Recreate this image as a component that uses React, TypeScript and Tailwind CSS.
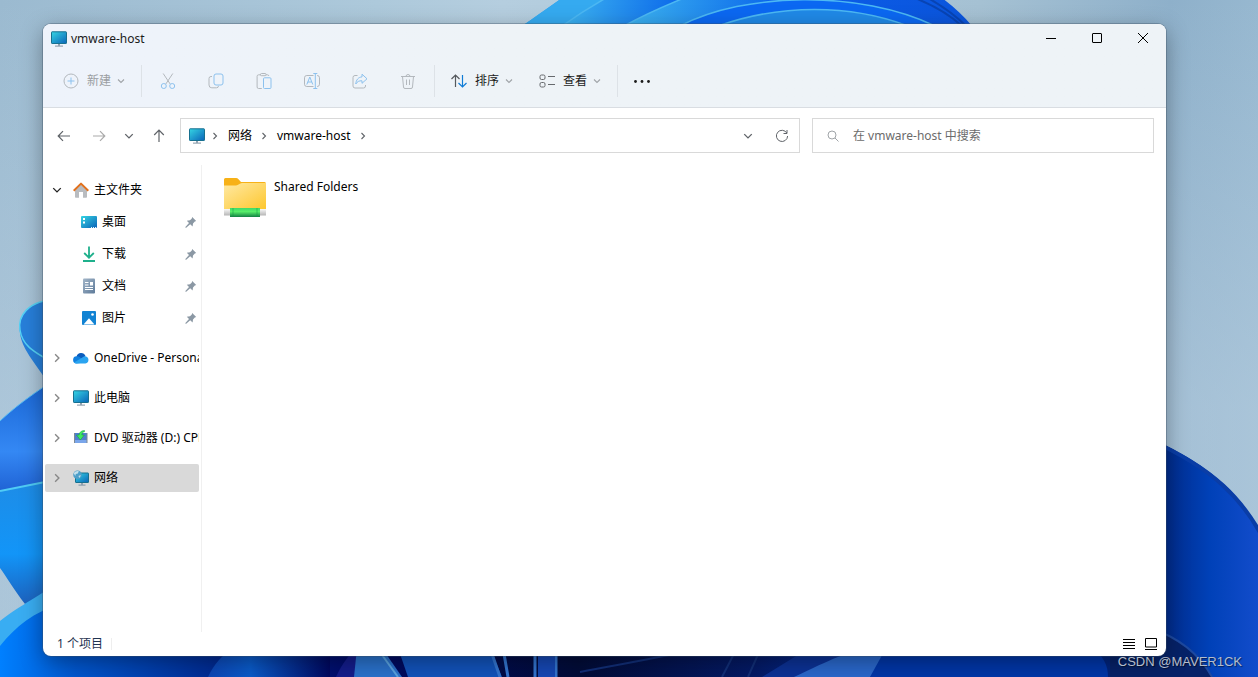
import type { ReactNode } from "react";

type IconProps = { className?: string };

function Monitor({ className = "h-4 w-4" }: IconProps) {
  return (
    <svg viewBox="0 0 16 16" className={className}>
      <defs>
        <linearGradient id="screen" x1="0" y1="0" x2="1" y2="1">
          <stop offset="0" stopColor="#35d5e3" />
          <stop offset="1" stopColor="#0a63b8" />
        </linearGradient>
      </defs>
      <path d="M7 12h2v3H7z" fill="#8fa0ae" />
      <path d="M4 14.5h8v1.2H4z" fill="#9aa8b5" />
      <rect x=".5" y=".8" width="15" height="11.7" rx=".6" fill="url(#screen)" stroke="#17708f" />
    </svg>
  );
}

function Chevron({ dir = "right", className = "h-2 w-2" }: IconProps & { dir?: "right" | "down" }) {
  return (
    <svg viewBox="0 0 8 8" className={className} fill="none" stroke="currentColor" strokeWidth="1.1">
      <path d={dir === "right" ? "M2.5 1 5.5 4 2.5 7" : "M1 2.5 4 5.5 7 2.5"} />
    </svg>
  );
}

function Arrow({ className = "" }: IconProps) {
  return (
    <svg viewBox="0 0 14 14" className={`h-3.5 w-3.5 ${className}`} fill="none" stroke="currentColor" strokeWidth="1.2">
      <path d="M13 7H1.2M6 2.2 1.2 7 6 11.8" />
    </svg>
  );
}

function Stroke({ children }: { children: ReactNode }) {
  return (
    <svg viewBox="0 0 16 16" className="h-4 w-4 shrink-0" fill="none" stroke="#b3b8bd" strokeWidth="1">
      {children}
    </svg>
  );
}

const BLUE = "#8cc1ee";

const tools = [
  {
    label: "剪切",
    icon: (
      <Stroke>
        <path d="M3.2.5 10.2 11M12.8.5 5.8 11" />
        <circle cx="3.8" cy="13" r="2.5" stroke={BLUE} />
        <circle cx="12.2" cy="13" r="2.5" stroke={BLUE} />
      </Stroke>
    ),
  },
  {
    label: "复制",
    icon: (
      <Stroke>
        <path d="M4 3.5H3a2 2 0 0 0-2 2V12a2.8 2.8 0 0 0 2.8 2.8h4.7a2 2 0 0 0 2-2" />
        <rect x="6" y="1" width="9" height="11" rx="2" stroke={BLUE} />
      </Stroke>
    ),
  },
  {
    label: "粘贴",
    icon: (
      <Stroke>
        <path d="M5 1.8H2.6A1.5 1.5 0 0 0 1.1 3.3V14a1.5 1.5 0 0 0 1.5 1.5h3.2M9.8 1.8h1.6a1.5 1.5 0 0 1 1.5 1.2" />
        <rect x="4.5" y=".5" width="5.6" height="2.2" rx="1" />
        <rect x="7.5" y="4.8" width="7.5" height="10.7" rx="1" stroke={BLUE} />
      </Stroke>
    ),
  },
  {
    label: "重命名",
    icon: (
      <Stroke>
        <path d="M9.5 2.5H2.8A2.3 2.3 0 0 0 .5 4.8v6.4a2.3 2.3 0 0 0 2.3 2.3h6.7M13 2.5h.2a2.3 2.3 0 0 1 2.3 2.3v6.4a2.3 2.3 0 0 1-2.3 2.3H13" />
        <path d="M2.8 11.5 5.8 4l3 7.5M3.8 9h4M9.3.5h4M9.3 15.5h4M11.3.5v15" stroke={BLUE} />
      </Stroke>
    ),
  },
  {
    label: "共享",
    icon: (
      <Stroke>
        <path d="M5.5 2.5H3a2 2 0 0 0-2 2V13a2 2 0 0 0 2 2h8.5a2 2 0 0 0 2-2v-1" />
        <path d="M10 1.2 15 5.8l-5 4.5V7.8C7 7.6 5.3 8.6 3.8 11 4 7 6.2 4.2 10 3.9z" stroke={BLUE} strokeLinejoin="round" />
      </Stroke>
    ),
  },
  {
    label: "删除",
    icon: (
      <Stroke>
        <path d="M1 3.5h14M6 3.5a2 2 0 0 1 4 0M2.5 3.5l1 10.5A1.5 1.5 0 0 0 5 15.5h6a1.5 1.5 0 0 0 1.5-1.5l1-10.5M6.5 6.5V12M9.5 6.5V12" />
      </Stroke>
    ),
  },
];

function HomeIcon() {
  return (
    <svg viewBox="0 0 16 16" className="h-4 w-4">
      <path d="M2 7.5 8 2l6 5.5V15a.8.8 0 0 1-.8.8H10V10H6v5.8H2.8A.8.8 0 0 1 2 15z" fill="#b9bcc0" />
      <path d="M.7 8.8 8 1.6l7.3 7.2" fill="none" stroke="#e2711d" strokeWidth="2" strokeLinejoin="round" />
    </svg>
  );
}

function DesktopIcon() {
  return (
    <svg viewBox="0 0 16 16" className="h-4 w-4">
      <rect y="2" width="16" height="12" rx="1" fill="url(#screen)" />
      <path d="M2 4h2v2H2zM2 7.5h2v2H2z" fill="#fff" />
      <path d="M10 13h1v1h-1zM12 13h1v1h-1zM14 13h1v1h-1z" fill="#e6f5ff" />
    </svg>
  );
}

function DownloadIcon() {
  return (
    <svg viewBox="0 0 16 16" className="h-4 w-4" fill="none" stroke="#1fb08c" strokeWidth="1.8">
      <path d="M8 .5v11M3.2 7 8 11.7 12.8 7M2 15h12" />
    </svg>
  );
}

function DocumentIcon() {
  return (
    <svg viewBox="0 0 16 16" className="h-4 w-4">
      <defs>
        <linearGradient id="paper" x1="0" y1="0" x2="1" y2="1">
          <stop offset="0" stopColor="#a3b6c9" />
          <stop offset="1" stopColor="#5d7a99" />
        </linearGradient>
      </defs>
      <rect x="2" y=".5" width="12" height="15" rx="1" fill="url(#paper)" />
      <path d="M4 4h3.5v1H4zM4 6.5h3.5v1H4zM9 4h3v3.5H9zM4 9h8v1H4zM4 11h8v1H4z" fill="#fff" />
    </svg>
  );
}

function PictureIcon() {
  return (
    <svg viewBox="0 0 16 16" className="h-4 w-4">
      <rect x="1" y="1" width="14" height="14" rx="1" fill="#1283d3" />
      <path d="m2.5 14.5 5.5-6.3 5.5 6.3z" fill="#fff" />
      <circle cx="11.5" cy="4.5" r="1.3" fill="#fff" />
    </svg>
  );
}

function CloudIcon() {
  return (
    <svg viewBox="0 0 16 16" className="h-4 w-4">
      <path d="M3.5 6.5A4.8 4.8 0 0 1 12.5 6L8 11z" fill="#0b5cbd" />
      <path d="M3.5 13.5A3.6 3.6 0 0 1 3.9 6.3c1.2 0 2.2.3 3 .9l6.5 5z" fill="#1180df" />
      <path d="M12.3 6.2a3.7 3.7 0 0 1 .1 7.3H3.5c-1 0-1.9-.3-2.5-1l8-4.7c1-.9 2-1.6 3.3-1.6z" fill="#2aa4f0" />
    </svg>
  );
}

function DiscIcon() {
  return (
    <svg viewBox="0 0 16 16" className="h-4 w-4">
      <rect x="1.5" y="3" width="12.5" height="10" fill="#4f7fd0" />
      <path d="M1.5 10H14v3H1.5z" fill="#7aa6ea" />
      <path d="M1.5 3v10M14 3v10" stroke="#7d8996" />
      <path d="M11.5.5C8.5.5 6.4 2 6 5H3.5L7.3 10 11.300 5H8.800c.3-2 1.200-3 2.700-3.300z" fill="#3be862" stroke="#179a3a" strokeWidth=".5" />
    </svg>
  );
}

function NetworkIcon() {
  return (
    <svg viewBox="0 0 16 16" className="h-4 w-4">
      <path d="M8 12h2v3H8zM5.5 14.5h7v1.2h-7z" fill="#8fa0ae" />
      <rect x="2.5" y="3" width="13" height="9.5" rx=".5" fill="url(#screen)" stroke="#17708f" />
      <circle cx="4.5" cy="4.8" r="4.3" fill="#4e9fc9" />
      <path d="M.8 3.500C1.800 1.500 3.800.8 5.800 1.200l-1 2.300-2 .5-.5 2zM5.300 6l2.500-1-1 3z" fill="#c3e0ec" />
    </svg>
  );
}

function Pin() {
  return (
    <svg viewBox="0 0 12 12" className="mr-0.5 ml-auto h-3 w-3 shrink-0">
      <path d="M7.200 1 11.200 5 9.800 5.600 8 7.400 7.600 10.400 5.200 8.200 1.200 11.800.5 11.700.4 11 4 7 1.800 4.800 5 4.300 6.800 2.500z" fill="#8b98a4" />
    </svg>
  );
}

const pinned = [
  { name: "桌面", icon: <DesktopIcon /> },
  { name: "下载", icon: <DownloadIcon /> },
  { name: "文档", icon: <DocumentIcon /> },
  { name: "图片", icon: <PictureIcon /> },
];

const roots = [
  { name: "OneDrive - Personal", icon: <CloudIcon /> },
  { name: "此电脑", icon: <Monitor /> },
  { name: "DVD 驱动器 (D:) CPBA", icon: <DiscIcon /> },
  { name: "网络", icon: <NetworkIcon />, selected: true },
];

function Wallpaper() {
  return (
    <svg viewBox="0 0 1258 677" preserveAspectRatio="none" className="absolute inset-0 h-full w-full">
      <defs>
        <linearGradient id="sky" x1="0" y1="0" x2="1" y2="0">
          <stop offset="0" stopColor="#9bbad0" />
          <stop offset=".3" stopColor="#adc9db" />
          <stop offset=".4" stopColor="#b5cedf" />
          <stop offset=".78" stopColor="#a5c1d3" />
          <stop offset=".93" stopColor="#8eb0ca" />
          <stop offset="1" stopColor="#97b8d0" />
        </linearGradient>
        <linearGradient id="haze" x1="0" y1="0" x2="0" y2="1">
          <stop offset="0" stopColor="#c0d4e4" stopOpacity="0" />
          <stop offset=".6" stopColor="#c0d4e4" stopOpacity=".75" />
        </linearGradient>
        <linearGradient id="petal" x1="0" y1="0" x2="1" y2="0">
          <stop offset="0" stopColor="#35aef2" />
          <stop offset=".45" stopColor="#0a60ee" />
          <stop offset="1" stopColor="#0b55dc" />
        </linearGradient>
        <linearGradient id="fold" x1="0" y1="0" x2="1" y2="0">
          <stop offset="0" stopColor="#3db4f0" />
          <stop offset="1" stopColor="#0a66ea" />
        </linearGradient>
        <linearGradient id="leaf" x1="0" y1="0" x2="0" y2="1">
          <stop offset="0" stopColor="#1763d2" />
          <stop offset=".65" stopColor="#3488f4" />
          <stop offset="1" stopColor="#1f62d4" />
        </linearGradient>
        <linearGradient id="leafLow" x1="0" y1="0" x2="0" y2="1">
          <stop offset="0" stopColor="#1e8ce6" />
          <stop offset=".6" stopColor="#1295f8" />
          <stop offset="1" stopColor="#1d62be" />
        </linearGradient>
        <linearGradient id="rightPetal" x1="0" y1="0" x2="1" y2="0">
          <stop offset="0" stopColor="#00247c" />
          <stop offset=".5" stopColor="#0041b8" />
          <stop offset="1" stopColor="#174fd0" />
        </linearGradient>
        <linearGradient id="floor" x1="0" y1="0" x2="1" y2="0">
          <stop offset="0" stopColor="#0080ff" />
          <stop offset=".06" stopColor="#0057cf" />
          <stop offset=".17" stopColor="#002b93" />
          <stop offset=".28" stopColor="#000b6a" />
          <stop offset=".46" stopColor="#020c38" />
          <stop offset=".6" stopColor="#041a66" />
          <stop offset=".72" stopColor="#0038b4" />
          <stop offset=".94" stopColor="#001d68" />
          <stop offset="1" stopColor="#0a45bd" />
        </linearGradient>
        <linearGradient id="glow" x1="0" y1="0" x2="1" y2="0">
          <stop offset="0" stopColor="#0c46b6" />
          <stop offset=".35" stopColor="#0a5bca" />
          <stop offset="1" stopColor="#00085f" />
        </linearGradient>
      </defs>
      <rect width="1258" height="677" fill="url(#sky)" />
      <rect width="1258" height="677" fill="url(#haze)" opacity=".6" />

      {/* top petals */}
      <path d="M522 26C535 17 548 8 562-2H942C954 7 964 16 972 26z" fill="url(#petal)" />
      <path d="M522 26C535 17 548 8 562-2H606C590 7 576 16 562 26z" fill="#35aaf0" />
      <path d="M562 26C576 16 590 7 606-2H684C662 7 642 16 624 26z" fill="url(#fold)" />
      <path d="M624 26C642 16 662 7 684-2H780C742 5 708 15 680 26z" fill="url(#fold)" />
      <path d="M680 26C745-8 860-10 935 26z" fill="#0b68f2" />
      <path d="M718 26C780 4 850 4 908 26z" fill="#2089e7" />
      <path
        d="M562 26C576 16 590 7 606-2M624 26C642 16 662 7 684-2M680 26C745-8 860-10 935 26M718 26C780 4 850 4 908 26"
        fill="none"
        stroke="#4cb8f3"
        strokeWidth="1.5"
      />
      <path d="M915-2C935 6 950 15 962 26M928-2C944 7 956 16 966 26" fill="none" stroke="#0844b4" strokeWidth="2" />

      {/* left petals */}
      <path d="M60 299C25 300 18 318 20 333 22 348 30 357 60 399z" fill="#277fda" />
      <path d="M60 299C25 300 18 318 20 330 22 344 30 351 60 366" fill="none" stroke="#55d2f5" strokeWidth="1.5" />
      <path d="M0 421C14 408 28 397 60 376V485L0 492z" fill="url(#leaf)" />
      <path d="M0 421C14 408 28 397 60 376" fill="none" stroke="#56bdf3" />
      <path d="M0 491 60 479V595L25 604C14 590 6 576 0 568z" fill="url(#leafLow)" />
      <path d="M0 491 60 479" stroke="#50ccf5" strokeWidth="2" />

      {/* bottom petals */}
      <path d="M0 623C14 611 28 603 60 586V640H1258V677H0z" fill="url(#floor)" />
      <path d="M0 621C14 610 28 602 60 582V604C34 612 16 626 0 646z" fill="#39adf2" />
      <path d="M208 677C214 664 222 655 234 648H330V677z" fill="url(#glow)" />
      <path d="M336 677C342 664 348 656 356 648V677z" fill="#141d8c" />
      <path d="M354 677 357 648H382L402 677z" fill="#2a72cc" />
      <path d="M377 648 398 677" stroke="#5ba5e2" strokeWidth="2" />
      <path d="M398 648H490L502 677H408z" fill="#1253bb" />
      <path d="M490 648 500 677M503 648 508 677M535 648V677M556 648V677" stroke="#3375d0" strokeWidth="3" />
      <path d="M538 650H555V677H538z" fill="#1648b5" />
      <path d="M580 672C620 664 660 658 700 648M722 677 736 650M748 677 760 650" fill="none" stroke="#122f78" strokeWidth="2" />
      <path d="M762 677 806 650H936L870 677z" fill="#0c3296" />
      <path d="M794 677C830 660 850 650 870 648H916L870 677z" fill="#2a68cc" />
      <path d="M870 677 886 648H1090C1104 655 1108 666 1108 677z" fill="#0036a8" />

      {/* right petals */}
      <path d="M1150 438C1210 465 1245 495 1270 550V677H1150z" fill="url(#rightPetal)" />
      <path d="M1150 440C1210 467 1245 497 1270 552" fill="none" stroke="#0a3da6" strokeWidth="4" />
      <path d="M1150 628C1180 638 1200 655 1212 677H1110V655z" fill="#062268" />
      <path d="M1150 628C1180 638 1200 655 1212 677" fill="none" stroke="#1d49a0" strokeWidth="2" />
    </svg>
  );
}

function TitleBar() {
  return (
    <div className="flex h-[29px] items-center pl-2">
      <Monitor />
      <span className="ml-1">vmware-host</span>
      <div className="ml-auto flex h-7 self-start text-black">
        <button aria-label="最小化" className="flex w-[46px] items-center justify-center">
          <svg viewBox="0 0 10 10" className="h-2.5 w-2.5" stroke="currentColor"><path d="M0 5.5h10" /></svg>
        </button>
        <button aria-label="最大化" className="flex w-[46px] items-center justify-center">
          <svg viewBox="0 0 10 10" className="h-2.5 w-2.5" fill="none" stroke="currentColor"><rect x=".5" y=".5" width="9" height="9" rx=".5" /></svg>
        </button>
        <button aria-label="关闭" className="flex w-[46px] items-center justify-center">
          <svg viewBox="0 0 10 10" className="h-2.5 w-2.5" stroke="currentColor"><path d="m0 0 10 10M10 0 0 10" /></svg>
        </button>
      </div>
    </div>
  );
}

function MenuButton({ label, icon, disabled = false }: { label: string; icon: ReactNode; disabled?: boolean }) {
  return (
    <button disabled={disabled} className="flex h-8 items-center px-[13px] disabled:text-[#9a9ea2]">
      {icon}
      <span className="mr-1.5 ml-2">{label}</span>
      <Chevron dir="down" className="h-2 w-2 text-[#a0a4a8]" />
    </button>
  );
}

function Toolbar() {
  return (
    <div className="flex h-[55px] items-center border-b border-[#d9dde2] pt-0.5">
      <div className="flex pr-[3px] pl-[7px]">
        <MenuButton
          disabled
          label="新建"
          icon={
            <Stroke>
              <circle cx="8" cy="8" r="7" />
              <path d="M8 4.5v7M4.5 8h7" stroke={BLUE} />
            </Stroke>
          }
        />
      </div>
      <div className="h-8 w-px bg-[#dde2e7]" />
      <div className="flex px-0.5">
        {tools.map((t) => (
          <button key={t.label} disabled aria-label={t.label} className="flex h-8 w-12 items-center justify-center">
            {t.icon}
          </button>
        ))}
      </div>
      <div className="h-8 w-px bg-[#dde2e7]" />
      <div className="flex px-[3px]">
        <MenuButton
          label="排序"
          icon={
            <svg viewBox="0 0 16 16" className="h-4 w-4" fill="none" strokeWidth="1.2">
              <path d="M4.5 14V2M.5 6l4-4 4 4" stroke="#55595d" />
              <path d="M11.5 2v12M7.5 10l4 4 4-4" stroke="#0f7bd6" />
            </svg>
          }
        />
        <MenuButton
          label="查看"
          icon={
            <svg viewBox="0 0 16 16" className="h-4 w-4" fill="none" stroke="#66696d">
              <rect x="1" y="2" width="5" height="4.5" rx="1.5" />
              <rect x="1" y="9.5" width="5" height="4.5" rx="1.5" />
              <path d="M9 3.5h7M9 11.5h7" />
            </svg>
          }
        />
      </div>
      <div className="h-8 w-px bg-[#dde2e7]" />
      <button aria-label="查看更多" className="flex h-8 w-12 items-center justify-center">
        <svg viewBox="0 0 16 16" className="h-4 w-4" fill="#1b1b1b">
          <circle cx="1.5" cy="8.5" r="1.4" />
          <circle cx="8" cy="8.5" r="1.4" />
          <circle cx="14.5" cy="8.5" r="1.4" />
        </svg>
      </button>
    </div>
  );
}

function AddressRow() {
  return (
    <div className="flex items-center pt-2.5 pr-3 pl-[3px] text-[#5f6368]">
      <button aria-label="后退" className="flex h-8 w-[35px] items-center justify-center"><Arrow /></button>
      <button aria-label="前进" disabled className="flex h-8 w-[35px] items-center justify-center text-[#aaa]"><Arrow className="rotate-180" /></button>
      <button aria-label="最近浏览的位置" className="flex h-8 w-[25px] items-center justify-center"><Chevron dir="down" className="h-2.5 w-2.5" /></button>
      <button aria-label="向上" className="flex h-8 w-[35px] items-center justify-center"><Arrow className="rotate-90" /></button>
      <nav className="ml-1 flex h-[35px] min-w-0 flex-1 items-center border border-[#d9d9d9] pl-2">
        <Monitor className="mr-1.5 h-4 w-4 shrink-0" />
        <Chevron />
        <a href="#network" className="mr-2 ml-[9px] text-black">网络</a>
        <Chevron />
        <a href="#host" className="mr-2 ml-[9px] text-black">vmware-host</a>
        <Chevron />
        <button aria-label="以前的位置" className="ml-auto flex h-full w-[34px] items-center justify-center"><Chevron dir="down" className="h-2.5 w-2.5" /></button>
        <button aria-label="刷新" className="flex h-full w-[34px] items-center justify-center">
          <svg viewBox="0 0 14 14" className="h-3.5 w-3.5" fill="none" stroke="currentColor">
            <path d="M11.8 4A5.6 5.6 0 1 0 12.6 7M12 1v3.5H8.5" />
          </svg>
        </button>
      </nav>
      <label className="ml-3 flex h-[35px] w-[342px] items-center gap-3.5 border border-[#d9d9d9] pl-3.5">
        <svg viewBox="0 0 12 12" className="h-3 w-3 shrink-0" fill="none" stroke="#a0a4a8">
          <circle cx="5" cy="5" r="4" />
          <path d="m8 8 3.5 3.5" />
        </svg>
        <input aria-label="搜索" placeholder="在 vmware-host 中搜索" className="min-w-0 flex-1 outline-none placeholder:text-[#6b6b6b]" />
      </label>
    </div>
  );
}

function Sidebar() {
  return (
    <aside className="mt-3 flex w-[159px] shrink-0 flex-col border-r border-[#f0f0f0] px-0.5 pt-[11px] whitespace-nowrap text-black">
      <ul className="flex flex-col gap-1">
        <li>
          <button className="flex h-7 w-full items-center">
            <span className="flex w-6 justify-center text-[#222]"><Chevron dir="down" className="h-2.5 w-2.5" /></span>
            <span className="mr-[5px] ml-1"><HomeIcon /></span>
            主文件夹
          </button>
        </li>
        {pinned.map((p) => (
          <li key={p.name}>
            <button className="flex h-7 w-full items-center pl-9">
              <span className="mr-[5px]">{p.icon}</span>
              {p.name}
              <Pin />
            </button>
          </li>
        ))}
      </ul>
      <ul className="mt-3 flex flex-col gap-3">
        {roots.map((r) => (
          <li key={r.name}>
            <button className={`flex h-7 w-full items-center overflow-hidden rounded-xs ${r.selected ? "bg-[#d9d9d9]" : ""}`}>
              <span className="flex w-6 shrink-0 justify-center text-[#888]"><Chevron className="h-2.5 w-2.5" /></span>
              <span className="mr-[5px] ml-1 shrink-0">{r.icon}</span>
              {r.name}
            </button>
          </li>
        ))}
      </ul>
    </aside>
  );
}

function SharedFolder() {
  return (
    <svg viewBox="0 0 42 40" className="h-10 w-[42px] shrink-0">
      <defs>
        <linearGradient id="folder" x1="0" y1="0" x2="1" y2="1">
          <stop offset="0" stopColor="#ffe9a3" />
          <stop offset="1" stopColor="#fdc72f" />
        </linearGradient>
        <linearGradient id="pipe" x1="0" y1="0" x2="0" y2="1">
          <stop offset="0" stopColor="#3fd968" />
          <stop offset=".4" stopColor="#58ee6a" />
          <stop offset="1" stopColor="#118044" />
        </linearGradient>
        <linearGradient id="steel" x1="0" y1="0" x2="0" y2="1">
          <stop offset="0" stopColor="#f8f8f8" />
          <stop offset="1" stopColor="#b5b5b5" />
        </linearGradient>
      </defs>
      <path d="M0 1.5Q0 0 1.5 0H12q1.5 0 2.5 1.2L17 4h23.5Q42 4 42 5.5V12H0z" fill="#f7b117" />
      <path d="M0 7.5h12c2.5 0 3.5-2.5 6-2.5h24v26H0z" fill="url(#folder)" />
      <path d="M0 31h42v6.5H0z" fill="url(#steel)" />
      <path d="M6 30h30v9H6z" fill="url(#pipe)" />
      <path d="M9 30v9M33 30v9" stroke="#0e9a45" strokeOpacity=".5" />
    </svg>
  );
}

export default function App() {
  return (
    <div className="relative flex h-screen overflow-hidden pt-6 pr-[92px] pb-[21px] pl-[43px] font-['Noto_Sans','Noto_Sans_CJK_SC',sans-serif] text-[12px] leading-4 text-[#1b1b1b]">
      <Wallpaper />
      <main className="relative flex min-w-0 flex-1 flex-col overflow-hidden rounded-lg bg-white shadow-[0_0_0_1px_rgba(60,80,100,0.35),0_6px_22px_rgba(0,0,0,0.35)]">
        <header className="bg-linear-to-r from-[#eef3fb] to-[#eef3f7] to-40%">
          <TitleBar />
          <Toolbar />
        </header>
        <AddressRow />
        <div className="flex min-h-0 flex-1">
          <Sidebar />
          <section className="flex-1 pt-[25px] pl-[22px]">
            <button className="flex items-start gap-2 text-black">
              <SharedFolder />
              <span className="leading-[18px]">Shared Folders</span>
            </button>
          </section>
        </div>
        <footer className="flex h-6 items-center pr-[9px] pl-3.5 text-[#1f3350]">
          <span>1 个项目</span>
          <span className="ml-2 h-3 w-px bg-[#eee]" />
          <div className="ml-auto flex gap-2.5 text-black">
            <button aria-label="详细信息">
              <svg viewBox="0 0 12 12" className="h-3 w-3" stroke="currentColor"><path d="M0 1.5h12M0 4.5h12M0 7.5h12M0 10.5h12" /></svg>
            </button>
            <button aria-label="大图标">
              <svg viewBox="0 0 12 12" className="h-3 w-3" fill="none" stroke="currentColor"><path d="M.5.5h11v8.5H.5zM0 11.5h12" /></svg>
            </button>
          </div>
        </footer>
      </main>
      <span className="absolute right-4 bottom-[7px] font-['Liberation_Sans',sans-serif] text-[13px] text-[#b4bdcb] [text-shadow:1px_1px_1px_rgba(0,0,0,0.5)]">CSDN @MAVER1CK</span>
    </div>
  );
}
